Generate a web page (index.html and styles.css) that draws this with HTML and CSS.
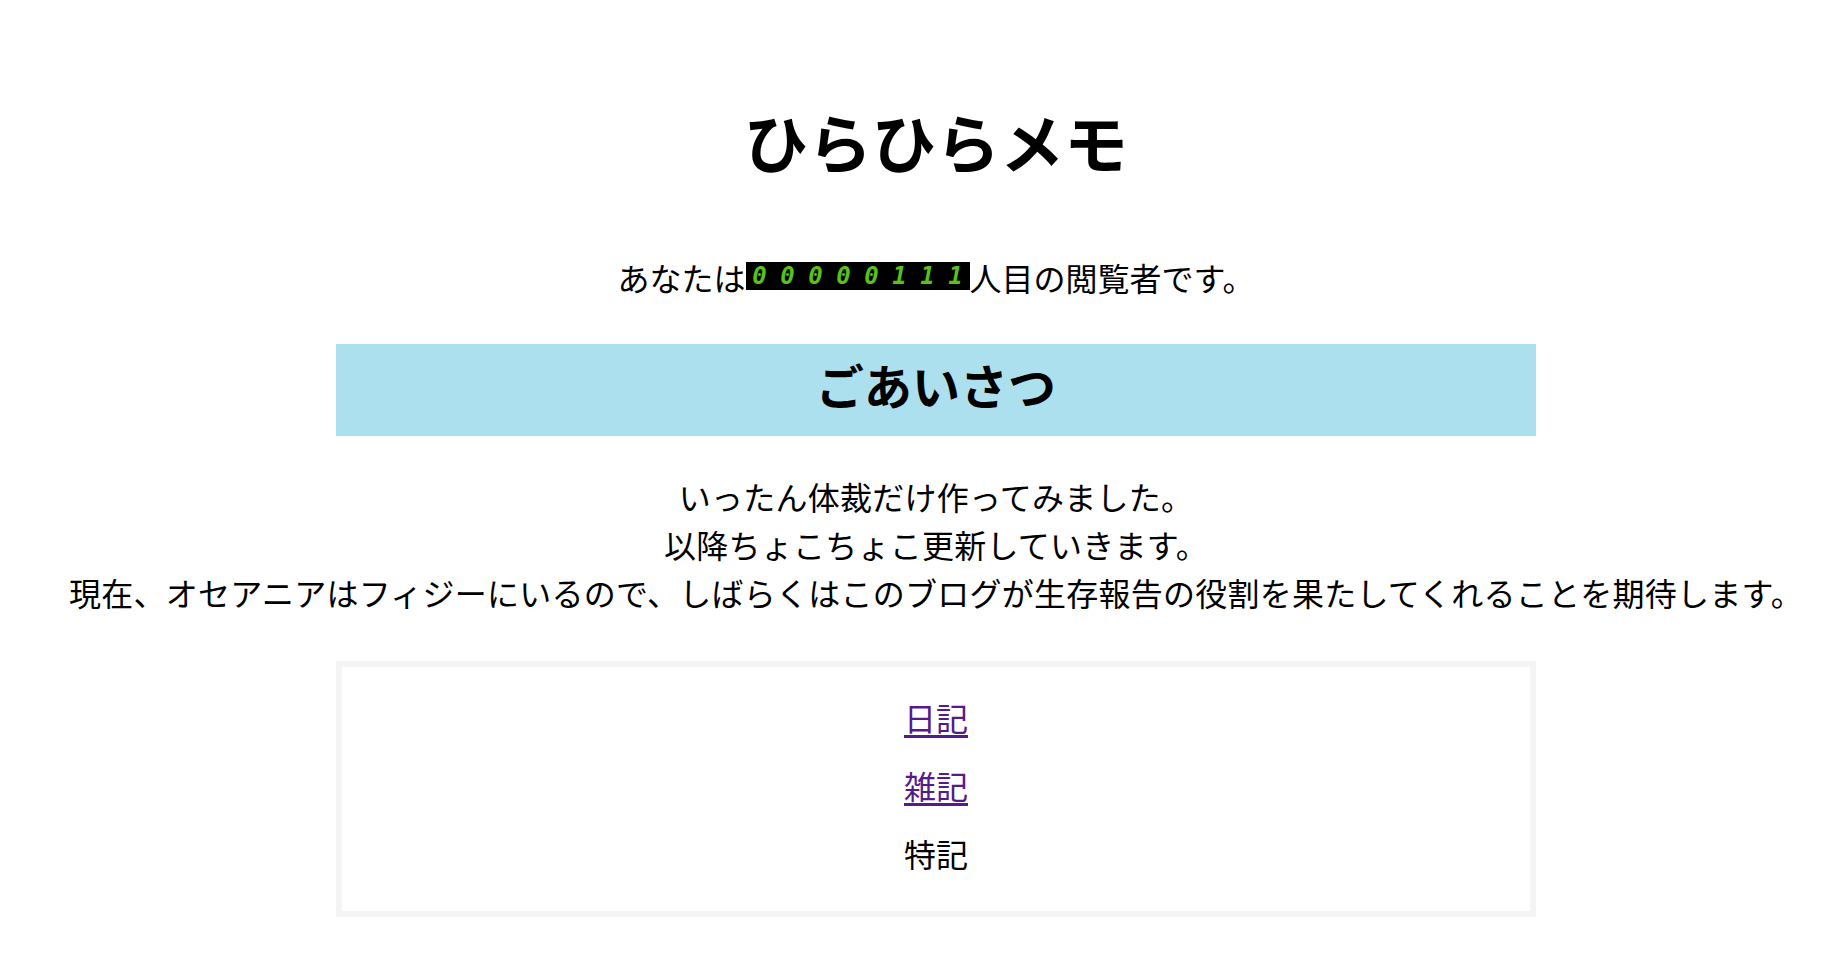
FILE: index.html
```html
<!DOCTYPE html>
<html lang="ja">
<head>
<meta charset="utf-8">
<title>ひらひらメモ</title>
<link rel="stylesheet" href="styles.css">
</head>
<body>
<div class="page">
  <h1 class="title">ひらひらメモ</h1>
  <p class="visitor">あなたは<span class="counter"><span>0</span><span>0</span><span>0</span><span>0</span><span>0</span><span>1</span><span>1</span><span>1</span></span>人目の閲覧者です。</p>
  <h2 class="section-head">ごあいさつ</h2>
  <p class="greeting">いったん体裁だけ作ってみました。<br>以降ちょこちょこ更新していきます。<br>現在、オセアニアはフィジーにいるので、しばらくはこのブログが生存報告の役割を果たしてくれることを期待します。</p>
  <nav class="menu">
    <a class="menu-link" href="#diary">日記</a>
    <a class="menu-link" href="#misc">雑記</a>
    <span class="menu-item">特記</span>
  </nav>
</div>
</body>
</html>
```

FILE: styles.css
```css
html, body {
  margin: 0;
  padding: 0;
  background: #ffffff;
}

body {
  font-family: "Noto Sans CJK JP", "Noto Sans", sans-serif;
  color: #000000;
  font-size: 32px;
  line-height: 48px;
}

.page {
  display: flex;
  flex-direction: column;
  align-items: center;
  padding-left: 24px;
  text-align: center;
}

.title {
  margin: 92px 0 0;
  font-size: 64px;
  line-height: 96px;
  font-weight: 700;
}

.visitor {
  margin: 65px 0 0;
  white-space: nowrap;
}

.counter {
  display: inline-flex;
  vertical-align: 7px;
  width: 224px;
  height: 28px;
  background: #000000;
  font-family: "DejaVu Sans Mono", monospace;
  font-style: italic;
  font-weight: 700;
  font-size: 24px;
  line-height: 28px;
  color: #58c21a;
}

.counter span {
  flex: 1 1 0;
  text-align: center;
}

.section-head {
  box-sizing: border-box;
  width: 1200px;
  margin: 43px 0 0;
  padding: 4px 0 16px;
  background: #ade0ee;
  font-size: 48px;
  line-height: 72px;
  font-weight: 700;
}

.greeting {
  margin: 36px 0 0;
  white-space: nowrap;
  letter-spacing: 0.25px;
}

.menu {
  box-sizing: border-box;
  width: 1200px;
  margin: 45px 0 0;
  border: 6px solid #f4f4f4;
  padding: 26px 0 34px;
  display: flex;
  flex-direction: column;
  align-items: center;
  gap: 20px;
}

.menu-link {
  color: #551a8b;
  text-decoration: underline;
  text-decoration-thickness: 3px;
  text-underline-offset: 4px;
}

.menu-item {
  color: #000000;
}
```
